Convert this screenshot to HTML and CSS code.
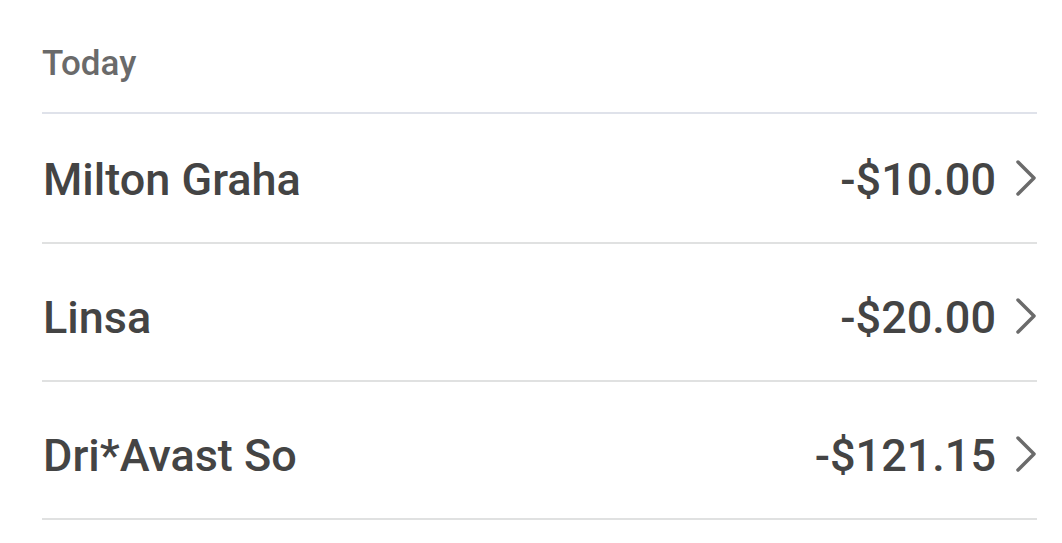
FILE: index.html
```html
<!DOCTYPE html>
<html>
<head>
<meta charset="utf-8">
<link rel="stylesheet" href="styles.css">
</head>
<body>
<div class="list">
  <div class="header">Today</div>
  <div class="rows">
    <div class="row">
      <span class="name">Milton Graha</span>
      <span class="right"><span class="amount">-$10.00</span>
        <svg class="chev" viewBox="0 0 22 38" width="22" height="38"><polyline points="3,3 19,19 3,35" /></svg></span>
    </div>
    <div class="row">
      <span class="name">Linsa</span>
      <span class="right"><span class="amount">-$20.00</span>
        <svg class="chev" viewBox="0 0 22 38" width="22" height="38"><polyline points="3,3 19,19 3,35" /></svg></span>
    </div>
    <div class="row">
      <span class="name">Dri*Avast So</span>
      <span class="right"><span class="amount">-$121.15</span>
        <svg class="chev" viewBox="0 0 22 38" width="22" height="38"><polyline points="3,3 19,19 3,35" /></svg></span>
    </div>
  </div>
</div>
</body>
</html>
```

FILE: styles.css
```css
html, body {
  margin: 0;
  padding: 0;
  background: #ffffff;
}
body {
  font-family: Roboto, "Liberation Sans", sans-serif;
}
.list {
  padding: 0 25px 0 42px;
}
.header {
  font-size: 35px;
  font-weight: 500;
  line-height: 40px;
  color: #6a6a6a;
  padding: 44px 0 28px 0;
  border-bottom: 2px solid #dfe2ea;
}
.row {
  display: flex;
  justify-content: space-between;
  align-items: center;
  padding: 48px 0 36px 1px;
  font-size: 45px;
  font-weight: 500;
  line-height: 52px;
  color: #444444;
  border-bottom: 2px solid #e0e1e1;
}
.row:first-child {
  padding-top: 40px;
}
.right {
  display: flex;
  align-items: center;
  gap: 19px;
}
.chev {
  display: block;
  margin-top: -4px;
}
.chev polyline {
  fill: none;
  stroke: #6b6b6b;
  stroke-width: 3.5;
  stroke-linecap: round;
  stroke-linejoin: round;
}
```
